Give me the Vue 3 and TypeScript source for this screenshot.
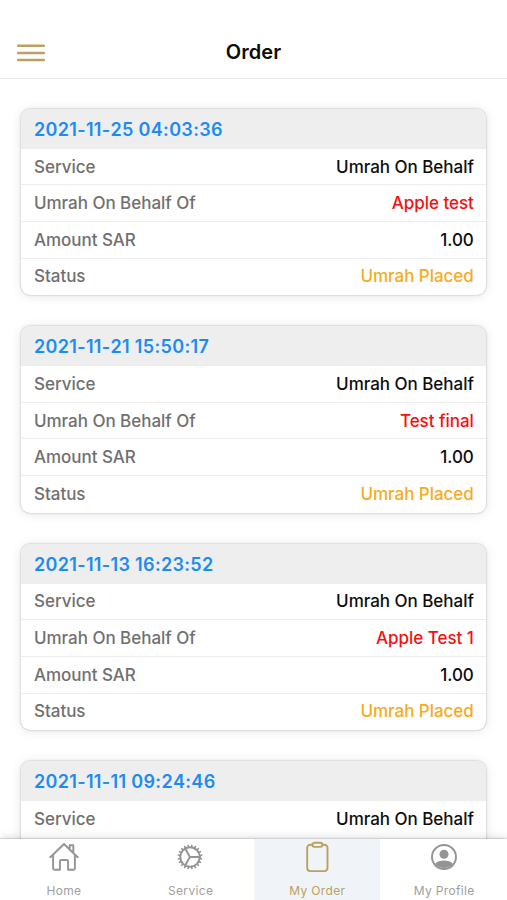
<script setup lang="ts">
interface Row {
  label: string
  value: string
  tone?: 'red' | 'orange'
}

interface Order {
  date: string
  rows: Row[]
}

interface Tab {
  label: string
  icon: 'home' | 'service' | 'order' | 'profile'
  active: boolean
}

const service: Row = { label: 'Service', value: 'Umrah On Behalf' }

function placedOrder(date: string, beneficiary: string): Order {
  return {
    date,
    rows: [
      service,
      { label: 'Umrah On Behalf Of', value: beneficiary, tone: 'red' },
      { label: 'Amount SAR', value: '1.00' },
      { label: 'Status', value: 'Umrah Placed', tone: 'orange' },
    ],
  }
}

const orders: Order[] = [
  placedOrder('2021-11-25 04:03:36', 'Apple test'),
  placedOrder('2021-11-21 15:50:17', 'Test final'),
  placedOrder('2021-11-13 16:23:52', 'Apple Test 1'),
  { date: '2021-11-11 09:24:46', rows: [service] },
]

const tabs: Tab[] = [
  { label: 'Home', icon: 'home', active: false },
  { label: 'Service', icon: 'service', active: false },
  { label: 'My Order', icon: 'order', active: true },
  { label: 'My Profile', icon: 'profile', active: false },
]

const teeth: number[] = Array.from({ length: 20 }, (_, i) => i * 18 + 9)
</script>

<template>
  <div class="screen">
    <header class="topbar">
      <button class="menu" aria-label="Menu">
        <svg viewBox="0 0 30 20"><path d="M2.200 2.700H27.800M2.200 9.900H27.800M2.200 17H27.800" /></svg>
      </button>
      <h1>Order</h1>
    </header>

    <main class="list">
      <article v-for="order in orders" :key="order.date" class="card">
        <h2>{{ order.date }}</h2>
        <div v-for="row in order.rows" :key="row.label" class="row">
          <span>{{ row.label }}</span><b :class="row.tone">{{ row.value }}</b>
        </div>
      </article>
    </main>

    <nav class="tabs">
      <div v-for="tab in tabs" :key="tab.label" class="tab" :class="{ active: tab.active }">
        <svg v-if="tab.icon === 'home'" viewBox="0 0 32 32" class="icon">
          <path d="M3.300 16.200 17 3 30.700 16.200M22.700 8.200V4.300h3.600v7.400M6.100 13.900v13.700q0 1.200 1.200 1.200h5.600v-8.200q0-1.600 1.600-1.600h5q1.600 0 1.600 1.600v8.200h5.600q1.200 0 1.200-1.200V13.900" />
        </svg>
        <svg v-else-if="tab.icon === 'service'" viewBox="0 0 32 32" class="icon">
          <circle cx="16" cy="16" r="9.700" />
          <path v-for="angle in teeth" :key="angle" class="tooth" d="M16 6V3.600" :transform="`rotate(${angle} 16 16)`" />
          <path d="M17 16H26M15.500 15.200 11 7.300M15.500 16.800 11 24.700" />
        </svg>
        <svg v-else-if="tab.icon === 'order'" viewBox="0 0 32 32" class="icon">
          <path d="M11.100 3.700H9.200a3 3 0 0 0-3 3v20.400a3 3 0 0 0 3 3h14.300a3 3 0 0 0 3-3V6.700a3 3 0 0 0-3-3h-1.900" />
          <rect x="11.400" y="1.700" width="10" height="4.200" rx="2.100" />
        </svg>
        <svg v-else viewBox="0 0 32 32" class="icon">
          <circle cx="16" cy="16" r="12" />
          <circle class="solid" cx="16" cy="13.200" r="4.500" />
          <path class="solid" d="M7 23C9 20.300 12.500 19.500 16 19.500S23 20.300 25 23A12 12 0 0 1 7 23Z" />
        </svg>
        <span>{{ tab.label }}</span>
      </div>
    </nav>
  </div>
</template>

<style>
body {
  background: #fff;
  overflow: hidden;
}
</style>

<style scoped>
.screen {
  display: flex;
  flex-direction: column;
  height: 900px;
  overflow: hidden;
  font-family: Inter, 'Liberation Sans', sans-serif;
  background: #fff;
}
.topbar {
  display: grid;
  grid-template-columns: 60px 1fr 60px;
  align-items: center;
  height: 79px;
  flex: none;
  box-sizing: border-box;
  padding: 25px 0 0;
  border-bottom: 1px solid #e6e6e6;
}
.menu {
  display: flex;
  margin: 2px 0 0 16px;
  padding: 0;
  border: 0;
  background: none;
}
.menu svg {
  width: 30px;
  height: 20px;
  fill: none;
  stroke: #b9a15f;
  stroke-width: 2.500;
  stroke-linecap: round;
}
h1 {
  margin: 0;
  text-align: center;
  font-size: 20px;
  line-height: 24px;
  font-weight: 600;
  letter-spacing: 0.1px;
  color: #0a0a0a;
}
.list {
  flex: 1;
  min-height: 0;
  overflow: hidden;
  padding: 30px 20.700px 0 21.300px;
  display: flex;
  flex-direction: column;
  gap: 31.200px;
}
.card {
  flex: none;
  height: 186.300px;
  overflow: hidden;
  border-radius: 9px;
  background: #fff;
  box-shadow: 0 0 2px rgba(0, 0, 0, 0.32), 0 1px 12px rgba(0, 0, 0, 0.1);
}
h2 {
  margin: 0;
  padding: 0 12.700px;
  height: 39.700px;
  line-height: 41px;
  font-size: 18px;
  font-weight: 600;
  font-kerning: none;
  letter-spacing: 0.330px;
  color: #1c8cf3;
  background: #eee;
}
.row {
  box-sizing: border-box;
  height: 36.650px;
  display: flex;
  justify-content: space-between;
  align-items: center;
  padding: 0 12.500px 0 12.700px;
  font-size: 17px;
  line-height: 20px;
  font-weight: 500;
  letter-spacing: -0.03px;
  color: #707070;
  border-bottom: 1px solid #ececec;
}
.row:last-child {
  border-bottom-color: transparent;
}
.row b {
  font-weight: 500;
  color: #0d0d0d;
}
.row b.red {
  color: #f51010;
}
.row b.orange {
  color: #f7ab1c;
}
.tabs {
  position: relative;
  display: grid;
  grid-template-columns: repeat(4, 1fr);
  flex: none;
  height: 61px;
  background: #fff;
  box-shadow: 0 0 2px rgba(0, 0, 0, 0.35), 0 -1px 9px rgba(0, 0, 0, 0.14);
}
.tab {
  display: flex;
  flex-direction: column;
  align-items: center;
  padding-top: 2px;
  color: #949494;
}
.tab.active {
  color: #b9a15f;
  background: #f0f4f8;
}
.tab span {
  margin-top: 10px;
  padding-left: 1px;
  font-size: 12px;
  line-height: 16px;
  letter-spacing: 0.330px;
  color: #a0a0a0;
}
.tab.active span {
  color: #b9a15f;
}
.icon {
  width: 32px;
  height: 32px;
  fill: none;
  stroke: currentColor;
  stroke-width: 1.900;
  stroke-linejoin: round;
  stroke-linecap: round;
}
.icon .tooth {
  stroke-width: 1.600;
  stroke-linecap: butt;
}
.icon .solid {
  fill: currentColor;
  stroke: none;
}
</style>
